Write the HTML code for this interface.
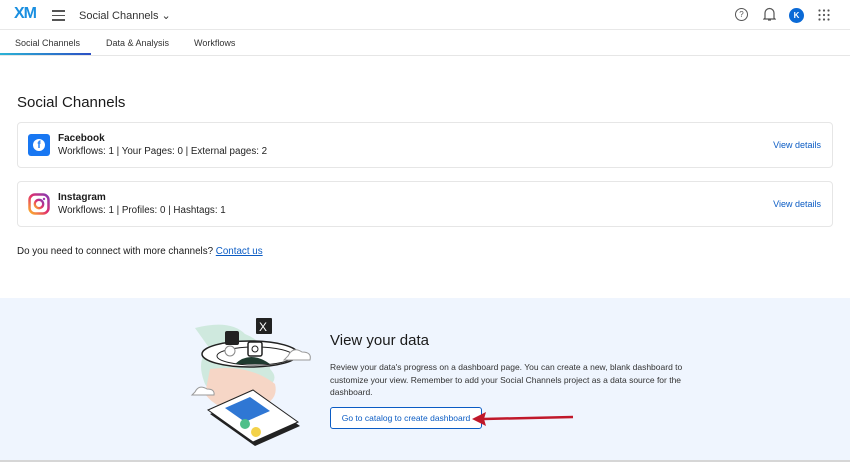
<!DOCTYPE html>
<html><head><meta charset="utf-8"><style>
*{box-sizing:border-box;margin:0;padding:0}
body{width:850px;height:468px;overflow:hidden;font-family:"Liberation Sans",sans-serif;color:#1a1a1a;background:#fff;position:relative}
.top{height:30px;border-bottom:1px solid #e8e8e8;position:relative}
.tabs{height:26px;border-bottom:1px solid #e6e6e6;position:relative;font-size:9px;color:#333}
.tabs span{position:absolute;top:8px}
.card{position:absolute;left:17px;width:816px;height:46px;border:1px solid #e6e6e6;border-radius:4px}
.card b{position:absolute;left:40px;top:10px;font-size:10px}
.card .s{position:absolute;left:40px;top:23px;font-size:9.8px;color:#222}
.card .v{position:absolute;right:11px;top:17px;font-size:9px;color:#0b5cc4}
.bot{position:absolute;left:0;top:298px;width:850px;height:164px;background:#eff5fe;border-bottom:2px solid #d6d6d6}
</style></head><body>
<div class="top">
<div style="position:absolute;left:14px;top:5px;font-size:16px;font-weight:bold;letter-spacing:-1px;color:#1a8fe0">XM</div>
<div style="position:absolute;left:52px;top:10px;width:13px">
<div style="height:1.5px;background:#555;margin-bottom:3px"></div><div style="height:1.5px;background:#555;margin-bottom:3px"></div><div style="height:1.5px;background:#555"></div></div>
<div style="position:absolute;left:79px;top:9px;font-size:11px;color:#333">Social Channels &#8964;</div>
<div style="position:absolute;left:735px;top:8px;width:13px;height:13px;border:1.3px solid #555;border-radius:50%;font-size:8px;text-align:center;line-height:11px;color:#555">?</div>
<svg style="position:absolute;left:763px;top:7px" width="13" height="15" viewBox="0 0 13 15"><path d="M2 11V6a4.5 4.5 0 0 1 9 0v5l1 1H1z M5 13h3" fill="none" stroke="#555" stroke-width="1.2"/></svg>
<div style="position:absolute;left:789px;top:8px;width:15px;height:15px;border-radius:50%;background:#0b6ad6;color:#fff;font-size:8px;font-weight:bold;text-align:center;line-height:15px">K</div>
<svg style="position:absolute;left:818px;top:9px" width="12" height="12"><g fill="#555"><circle cx="1.5" cy="1.5" r="1.1"/><circle cx="6" cy="1.5" r="1.1"/><circle cx="10.5" cy="1.5" r="1.1"/><circle cx="1.5" cy="6" r="1.1"/><circle cx="6" cy="6" r="1.1"/><circle cx="10.5" cy="6" r="1.1"/><circle cx="1.5" cy="10.5" r="1.1"/><circle cx="6" cy="10.5" r="1.1"/><circle cx="10.5" cy="10.5" r="1.1"/></g></svg>
</div>
<div class="tabs"><span style="left:15px">Social Channels</span><span style="left:106px">Data &amp; Analysis</span><span style="left:194px">Workflows</span>
<div style="position:absolute;left:0;top:23px;width:91px;height:2px;background:linear-gradient(90deg,#2bb3d6,#2b4fc4)"></div></div>
<div style="position:absolute;left:17px;top:94px;font-size:15px">Social Channels</div>
<div class="card" style="top:122px">
<div style="position:absolute;left:10px;top:11px;width:22px;height:22px;background:#1877f2;border-radius:3px"><div style="position:absolute;left:5px;top:5px;width:12px;height:12px;border-radius:50%;background:#fff;color:#1877f2;font-size:10px;font-weight:bold;text-align:center;line-height:13px">f</div></div>
<b>Facebook</b><div class="s">Workflows: 1 | Your Pages: 0 | External pages: 2</div><div class="v">View details</div></div>
<div class="card" style="top:181px">
<svg style="position:absolute;left:10px;top:11px" width="22" height="22"><defs><linearGradient id="g" x1="0" y1="1" x2="1" y2="0"><stop offset="0" stop-color="#fdb32b"/><stop offset=".5" stop-color="#e1306c"/><stop offset="1" stop-color="#833ab4"/></linearGradient></defs><rect x="1.5" y="1.5" width="19" height="19" rx="5.5" fill="none" stroke="url(#g)" stroke-width="2.5"/><circle cx="11" cy="11" r="4.2" fill="none" stroke="url(#g)" stroke-width="2.3"/><circle cx="16" cy="6" r="1.2" fill="#a83ab4"/></svg>
<b>Instagram</b><div class="s">Workflows: 1 | Profiles: 0 | Hashtags: 1</div><div class="v">View details</div></div>
<div style="position:absolute;left:17px;top:246px;font-size:9.8px">Do you need to connect with more channels? <span style="color:#0b5cc4;text-decoration:underline">Contact us</span></div>
<div class="bot">
<svg style="position:absolute;left:190px;top:16px" width="125" height="132" viewBox="0 0 125 132">
<path d="M5 14 Q40 5 55 20 Q80 30 80 55 Q95 70 60 80 Q30 95 15 70 Q5 45 20 35z" fill="#cfe9de"/>
<path d="M20 55 Q60 50 85 70 Q90 90 60 95 Q30 100 15 80z" fill="#f6d6c6"/>
<ellipse cx="60" cy="40" rx="48" ry="13" fill="#fff" stroke="#222" stroke-width="1.5"/>
<ellipse cx="65" cy="42" rx="38" ry="9" fill="none" stroke="#222"/>
<path d="M45 50 Q60 36 80 50z" fill="#1f3b2f"/>
<rect x="35" y="17" width="14" height="14" rx="2" fill="#222"/>
<rect x="66" y="4" width="16" height="16" rx="1" fill="#222"/><text x="69" y="17" font-size="12" fill="#fff" font-family="Liberation Sans">X</text>
<rect x="58" y="28" width="14" height="14" rx="2" fill="#fff" stroke="#222" stroke-width="1.5"/><circle cx="65" cy="35" r="3" fill="none" stroke="#222"/>
<circle cx="40" cy="37" r="5" fill="#fff" stroke="#888"/>
<path d="M98 42 q5-10 14-4 q10 0 8 8 h-26z" fill="#fff" stroke="#999"/>
<path d="M5 78 q4-8 12-3 q8 0 7 6 h-22z" fill="#fff" stroke="#999"/>
<path d="M20 100 L65 80 L110 112 L65 132z" fill="#222"/>
<path d="M18 96 L63 76 L108 108 L63 128z" fill="#fff" stroke="#222"/>
<path d="M35 94 L60 83 L80 97 L55 108z" fill="#2f77d4"/>
<circle cx="55" cy="110" r="5" fill="#4fbf8a"/><circle cx="66" cy="118" r="5" fill="#f3d24a"/>
</svg>
<div style="position:absolute;left:330px;top:34px;font-size:15px;color:#1a1a1a">View your data</div>
<div style="position:absolute;left:330px;top:63px;width:370px;font-size:8.5px;line-height:12.5px;color:#333">Review your data's progress on a dashboard page. You can create a new, blank dashboard to customize your view. Remember to add your Social Channels project as a data source for the dashboard.</div>
<div style="position:absolute;left:330px;top:109px;width:152px;height:22px;border:1px solid #0b5cc4;border-radius:3px;background:#fff;font-size:8.5px;color:#0b5cc4;text-align:center;line-height:20px">Go to catalog to create dashboard</div>
<svg style="position:absolute;left:468px;top:111px" width="110" height="20"><path d="M105 8 L15 10" stroke="#c0182a" stroke-width="2.5"/><path d="M4 10 L18 3 L16 10 L18 17z" fill="#c0182a"/></svg>
</div>
</body></html>
